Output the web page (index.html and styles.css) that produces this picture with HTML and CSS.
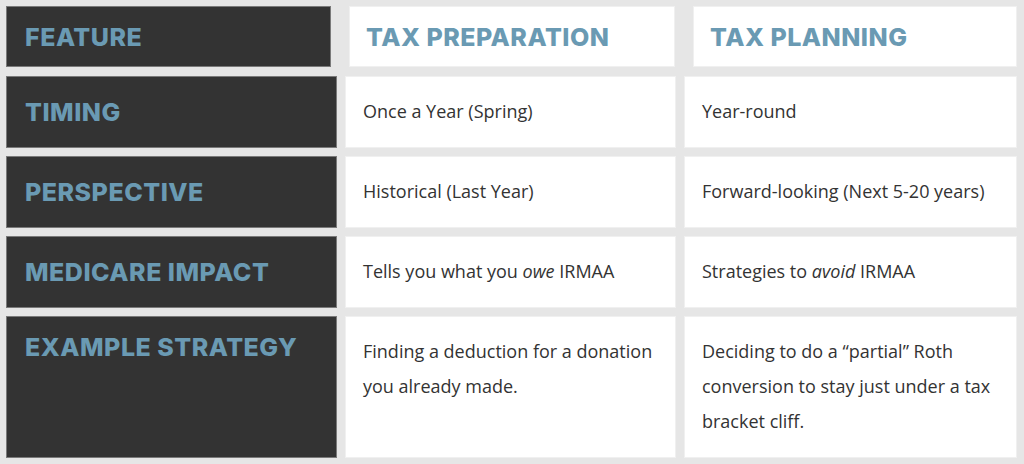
FILE: index.html
```html
<!DOCTYPE html>
<html lang="en">
<head>
<meta charset="utf-8">
<title>Tax Preparation vs Tax Planning</title>
<link rel="stylesheet" href="styles.css">
</head>
<body>
<div class="compare">
  <div class="row row--head">
    <div class="cell cell--label"><span class="heading">FEATURE</span></div>
    <div class="cell cell--colhead"><span class="heading">TAX PREPARATION</span></div>
    <div class="cell cell--colhead"><span class="heading">TAX PLANNING</span></div>
  </div>
  <div class="row">
    <div class="cell cell--label"><span class="heading">TIMING</span></div>
    <div class="cell cell--text"><p class="copy">Once a Year (Spring)</p></div>
    <div class="cell cell--text"><p class="copy">Year-round</p></div>
  </div>
  <div class="row">
    <div class="cell cell--label"><span class="heading">PERSPECTIVE</span></div>
    <div class="cell cell--text"><p class="copy">Historical (Last Year)</p></div>
    <div class="cell cell--text"><p class="copy">Forward-looking (Next 5-20 years)</p></div>
  </div>
  <div class="row">
    <div class="cell cell--label"><span class="heading">MEDICARE IMPACT</span></div>
    <div class="cell cell--text"><p class="copy">Tells you what you <em>owe</em> IRMAA</p></div>
    <div class="cell cell--text"><p class="copy">Strategies to <em>avoid</em> IRMAA</p></div>
  </div>
  <div class="row row--tall">
    <div class="cell cell--label"><span class="heading">EXAMPLE STRATEGY</span></div>
    <div class="cell cell--text"><p class="copy">Finding a deduction for a donation you already made.</p></div>
    <div class="cell cell--text"><p class="copy">Deciding to do a “partial” Roth conversion to stay just under a tax bracket cliff.</p></div>
  </div>
</div>
</body>
</html>
```
FILE: styles.css
```css
html, body {
  margin: 0;
  padding: 0;
}
body {
  background: #e6e6e6;
  font-family: "Open Sans", "Liberation Sans", sans-serif;
  color: #333333;
}
.compare {
  display: flex;
  flex-direction: column;
  gap: 8px;
  padding: 6px 7px 6px 6px;
}
.row {
  display: grid;
  grid-template-columns: 331px 331px 1fr;
  column-gap: 8px;
}
.row--head {
  grid-template-columns: 325px 326px 1fr;
  column-gap: 18px;
  margin-bottom: 1px;
}
.cell {
  box-sizing: border-box;
  display: flex;
  align-items: center;
}
.cell--label {
  background: #333333;
  border: 1px solid #7a7a7a;
  padding: 0 18px;
}
.cell--colhead {
  background: #ffffff;
  border: 1px solid #f0f0f0;
  padding: 0 16px;
}
.row--head .cell {
  height: 61px;
}
.cell--text {
  background: #ffffff;
  border: 1px solid #f0f0f0;
  padding: 17px 16px 18px 17px;
  min-height: 71px;
}
.copy {
  margin: 0;
  font-size: 18px;
  line-height: 35px;
}
.copy em {
  font-style: italic;
}
.heading {
  font-family: Inter, "Liberation Sans", sans-serif;
  font-weight: 800;
  font-size: 25px;
  line-height: 30px;
  color: #6a9ab3;
  letter-spacing: 0.5px;
}
.row--tall .cell--label {
  align-items: flex-start;
  padding-top: 15px;
}
.row--tall .cell--text {
  align-items: flex-start;
}
```
